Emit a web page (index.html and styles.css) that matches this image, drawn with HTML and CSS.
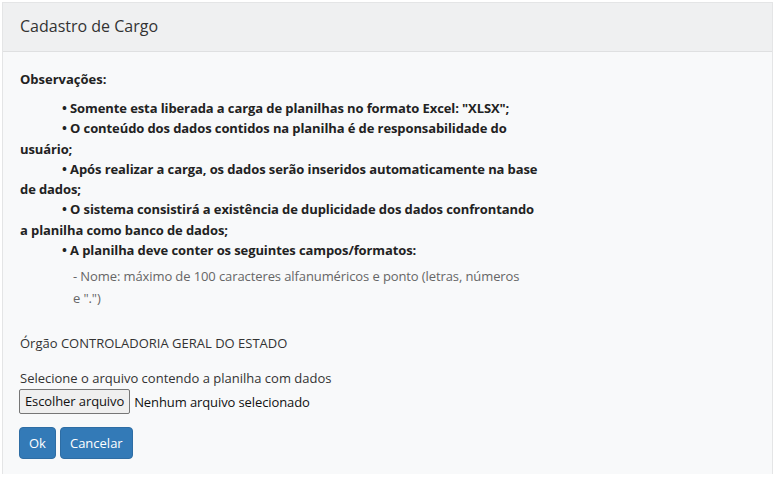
FILE: index.html
```html
<!DOCTYPE html>
<html lang="pt-BR">
<head>
    <meta charset="UTF-8">
    <meta name="viewport" content="width=device-width, initial-scale=1.0">
    <title>Cadastro de Cargo</title>
    <link rel="stylesheet" href="styles.css">
</head>
<body>
  <div class="panel">
    <div class="panel-heading">Cadastro de Cargo</div>
    <div class="panel-body">
      <div class="obs">
        <p class="obs-title">Observações:</p>
        <p class="obs-item">• Somente esta liberada a carga de planilhas no formato Excel: "XLSX";</p>
        <p class="obs-item">• O conteúdo dos dados contidos na planilha é de responsabilidade do usuário;</p>
        <p class="obs-item">• Após realizar a carga, os dados serão inseridos automaticamente na base de dados;</p>
        <p class="obs-item">• O sistema consistirá a existência de duplicidade dos dados confrontando a planilha como banco de dados;</p>
        <p class="obs-item">• A planilha deve conter os seguintes campos/formatos:</p>
        <p class="obs-sub">- Nome: máximo de 100 caracteres alfanuméricos e ponto (letras, números e ".")</p>
      </div>

      <p class="orgao">Órgão CONTROLADORIA GERAL DO ESTADO</p>

      <form id="cargaForm">
        <label for="arquivo" class="file-label">Selecione o arquivo contendo a planilha com dados</label>
        <div class="file-row">
          <label for="arquivo" class="file-btn">Escolher arquivo</label>
          <span class="file-name">Nenhum arquivo selecionado</span>
          <input type="file" id="arquivo" name="arquivo" accept=".xlsx">
        </div>

        <div class="actions">
          <button type="submit" class="btn">Ok</button>
          <button type="button" class="btn">Cancelar</button>
        </div>
      </form>
    </div>
  </div>
</body>
</html>
```

FILE: styles.css
```css
body {
    margin: 0;
    padding: 2px 6px 0 2px;
    background: #fff;
    font-family: "Open Sans", Arial, sans-serif;
    font-size: 13px;
    color: #333;
}

.panel {
    border: 1px solid #e4e5e6;
    border-bottom: none;
    background-color: #f8f9fa;
}

.panel-heading {
    background-color: #eff0f1;
    border-bottom: 1px solid #dfe0e1;
    padding: 12px 17px 13px;
    font-size: 16px;
    line-height: 23px;
    color: #333;
}

.panel-body {
    padding: 17px 17px 15px 16px;
}

.obs {
    width: 521px;
}

p {
    margin: 0;
}

.obs-title {
    font-weight: bold;
    color: #222;
    line-height: 20px;
    margin-bottom: 9px;
    padding-left: 1px;
}

.obs-item {
    font-weight: bold;
    color: #222;
    line-height: 20.3px;
    text-indent: 42px;
    padding-left: 1px;
    letter-spacing: -0.1px;
}

.obs-sub {
    padding-left: 54px;
    padding-right: 14px;
    margin-top: 5px;
    line-height: 22px;
    color: #666;
    letter-spacing: -0.1px;
}

.orgao {
    margin-top: 24px;
    padding-left: 1px;
    line-height: 20px;
}

.file-label {
    display: block;
    margin-top: 15px;
    padding-left: 1px;
    line-height: 20px;
}

.file-row {
    display: flex;
    align-items: center;
    gap: 4px;
    margin-top: 1px;
}

.file-row input[type="file"] {
    display: none;
}

.file-btn {
    display: inline-block;
    padding: 2px 5px;
    line-height: 19px;
    background-color: #efefef;
    border: 1px solid #767676;
    border-radius: 2px;
    color: #111;
    letter-spacing: -0.1px;
}

.file-name {
    color: #111;
    letter-spacing: -0.1px;
}

.actions {
    display: flex;
    gap: 4px;
    margin-top: 13px;
}

.btn {
    background-color: #337ab7;
    color: #fff;
    font-family: inherit;
    font-size: 13px;
    line-height: 20px;
    padding: 5px 9px;
    border: 1px solid #2e6da4;
    border-radius: 4px;
    cursor: pointer;
}
```
